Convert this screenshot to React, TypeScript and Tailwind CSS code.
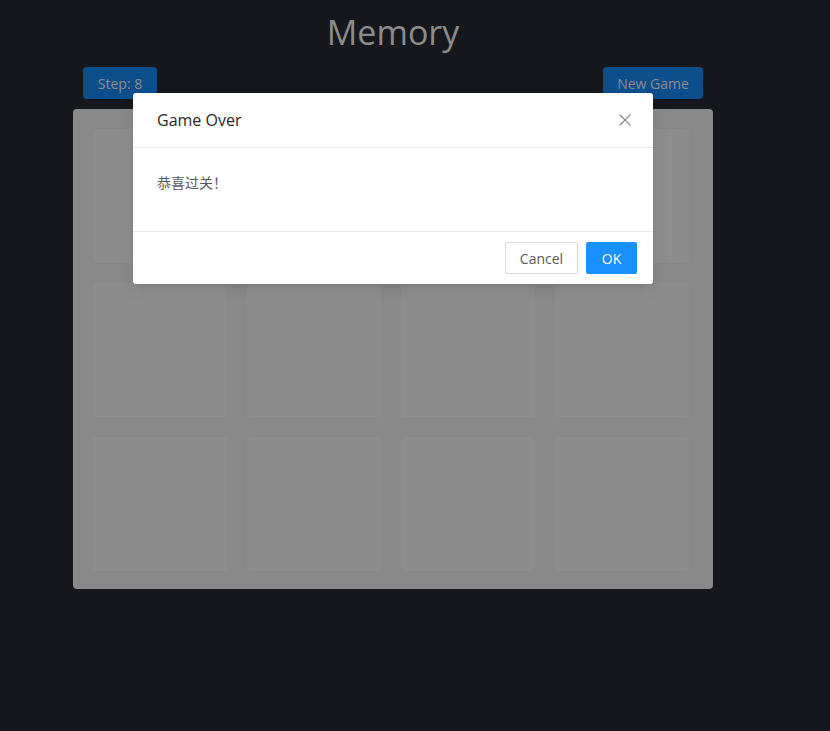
import React from "react";

const font = { fontFamily: '"Open Sans", "Noto Sans CJK SC", sans-serif' };

export default function App() {
  const cards = Array.from({ length: 12 });
  return (
    <div className="relative min-h-[731px] w-full bg-[#17181d]" style={font}>
      <div className="ml-[73px] w-[640px] pt-[10px]">
        <h1 className="text-center text-[34px] leading-[44px] text-[#8c8c8c]">Memory</h1>
        <div className="mt-[13px] flex items-center justify-between px-[10px]">
          <button className="h-[32px] w-[74px] rounded-[4px] bg-[#0d4f8c] text-[14px] text-[#8c8c8c]">
            Step: 8
          </button>
          <button className="h-[32px] w-[100px] rounded-[4px] bg-[#0d4f8c] text-[14px] text-[#8c8c8c]">
            New Game
          </button>
        </div>
        <div className="mt-[10px] h-[480px] w-[640px] rounded-[4px] bg-[#898989] pl-[20px] pt-[20px]">
          <div className="grid grid-cols-[134px_134px_134px_134px] grid-rows-[134px_134px_134px] gap-x-[20px] gap-y-[20px]">
            {cards.map((_, i) => (
              <div key={i} className="rounded-[4px] bg-[#8d8d8d]" />
            ))}
          </div>
        </div>
      </div>

      {/* Modal */}
      <div className="absolute left-[133px] top-[93px] w-[520px] overflow-hidden rounded-[3px] bg-white shadow-[0_3px_6px_-4px_rgba(0,0,0,0.12),0_6px_16px_0_rgba(0,0,0,0.08)]">
        <div className="flex h-[55px] items-center justify-between border-b border-[#e8e8e8] px-[24px]">
          <div className="text-[16px] font-medium leading-[22px] text-[#262626]">Game Over</div>
          <svg width="14" height="14" viewBox="0 0 14 14" className="mr-[-3px]">
            <path d="M1.5 1.5 L12.5 12.5 M12.5 1.5 L1.5 12.5" stroke="#8c8c8c" strokeWidth="1.2" fill="none" />
          </svg>
        </div>
        <div className="px-[24px] pt-[24px] pb-[24px]">
          <p className="mb-[13px] text-[14px] leading-[22px] text-[#595959]">恭喜过关！</p>
        </div>
        <div className="flex justify-end gap-[8px] border-t border-[#e8e8e8] px-[16px] py-[10px]">
          <button className="h-[32px] w-[73px] rounded-[2px] border border-[#d9d9d9] bg-white text-[14px] text-[#595959]">
            Cancel
          </button>
          <button className="h-[32px] w-[51px] rounded-[2px] bg-[#1890ff] text-[14px] text-white">
            OK
          </button>
        </div>
      </div>
    </div>
  );
}
